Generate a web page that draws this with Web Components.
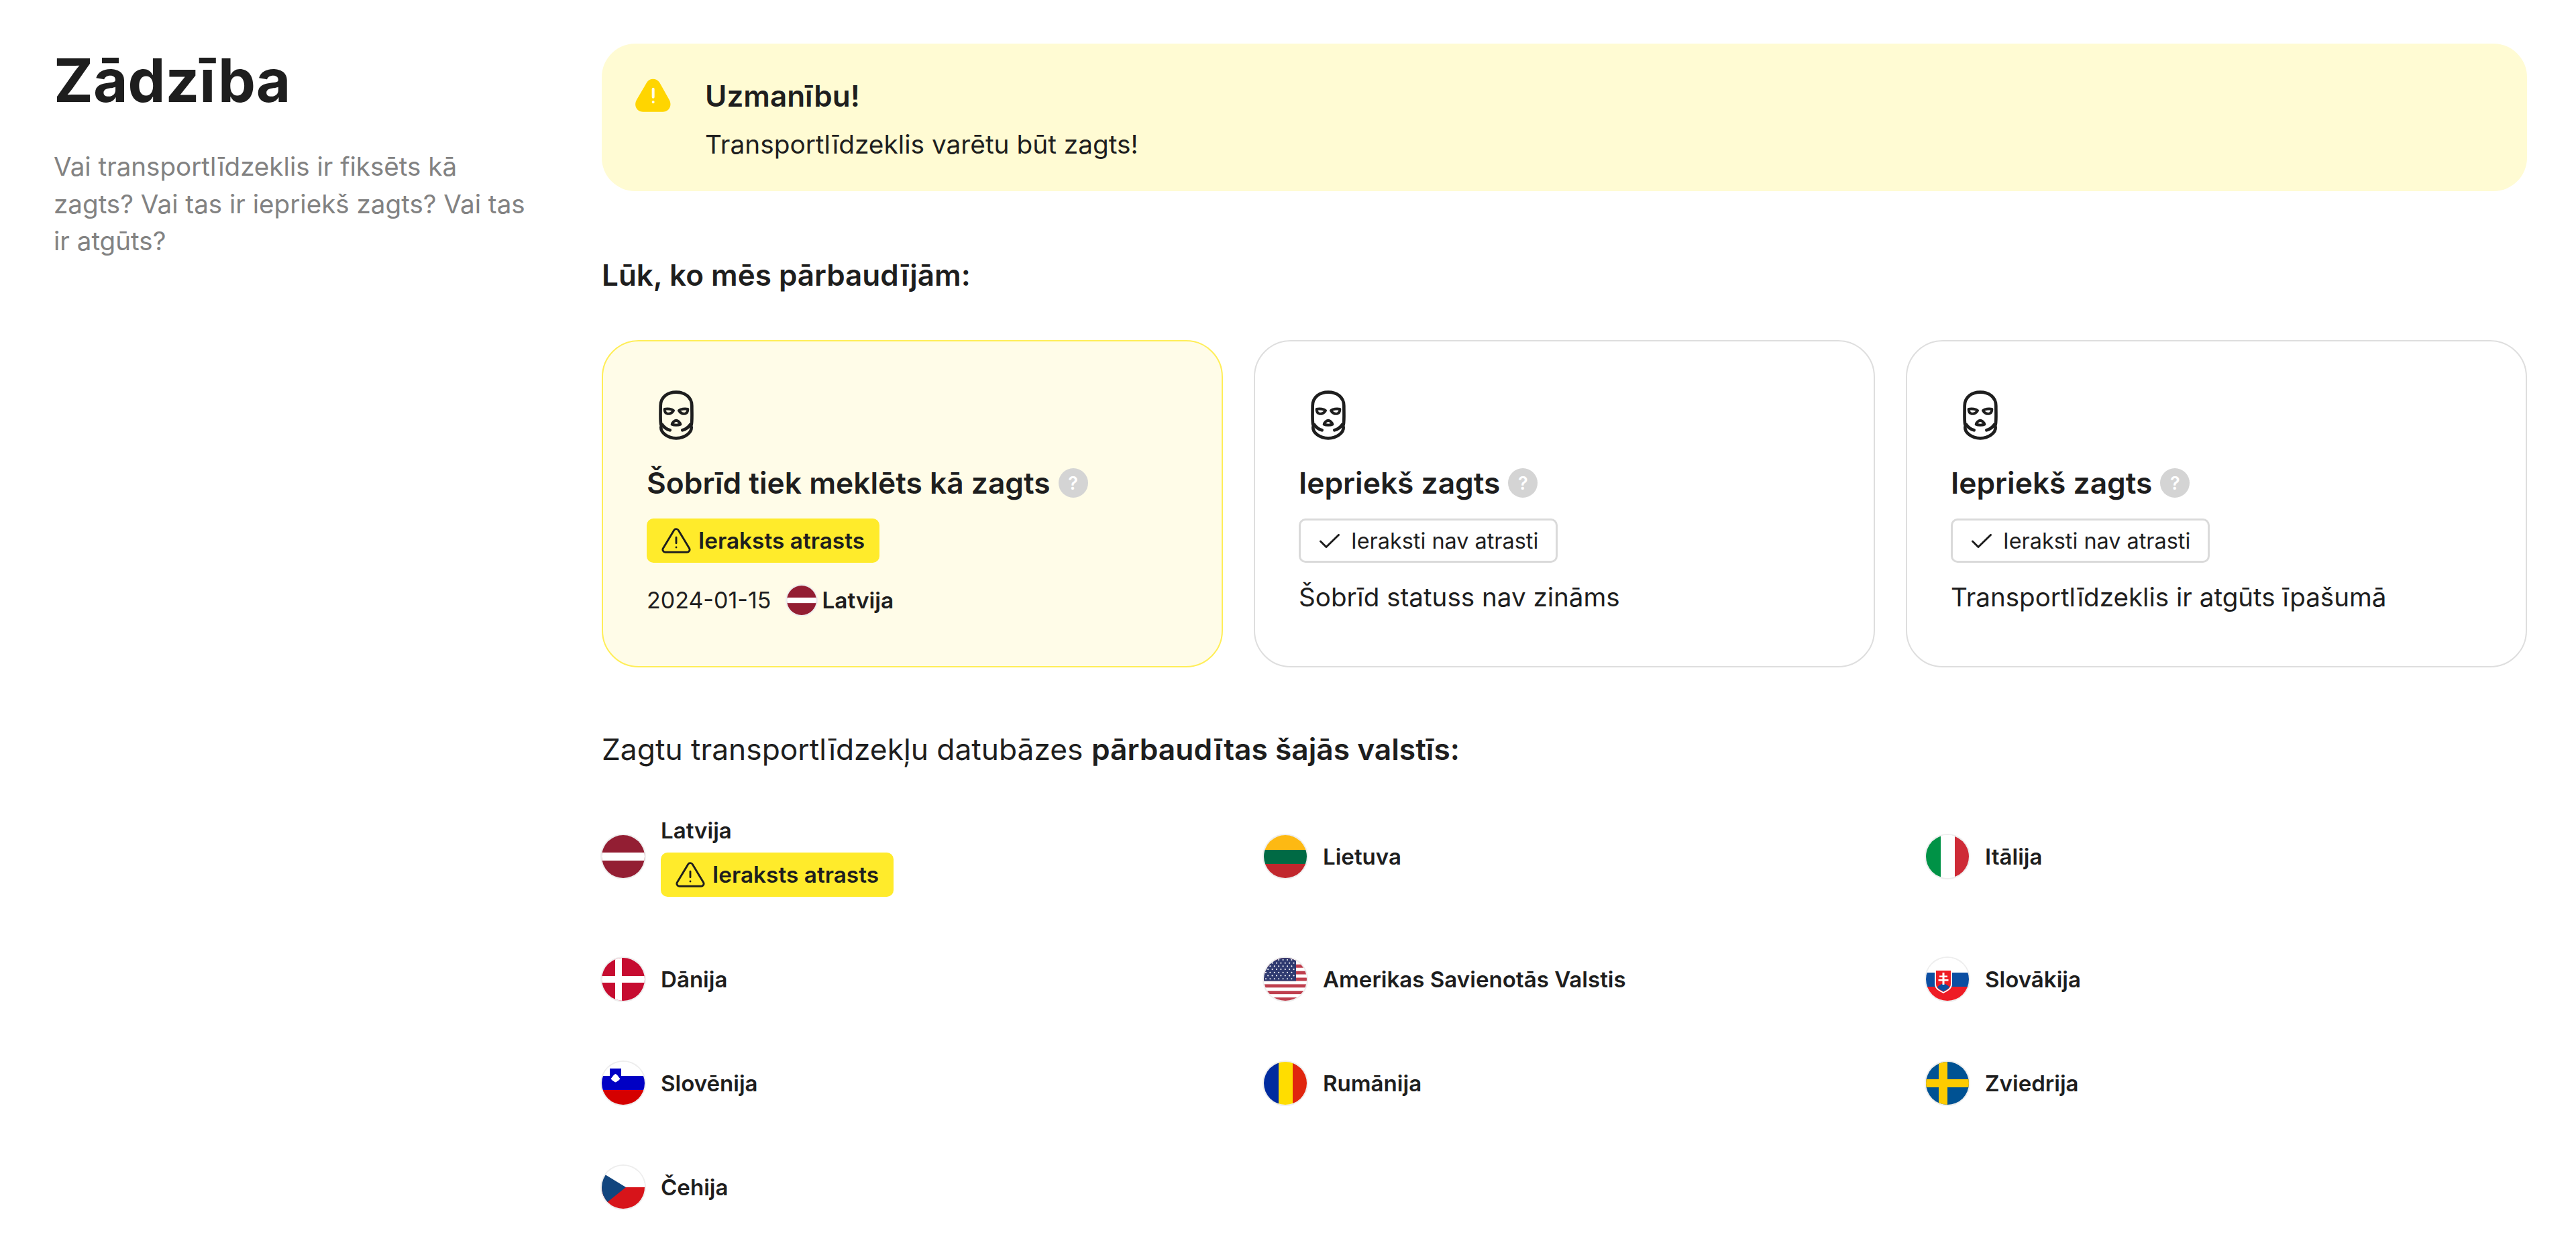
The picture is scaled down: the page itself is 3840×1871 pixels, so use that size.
<!DOCTYPE html>
<html lang="lv">
<head>
<meta charset="utf-8">
<title>Zādzība</title>
<style>
  html, body { margin: 0; background: #fff; }
  body { font-family: Inter, "Liberation Sans", sans-serif; color: #1e1e1e; }
</style>
</head>
<body>
<theft-page>
  <span slot="title">Zādzība</span>
  <span slot="lead">Vai transportlīdzeklis ir fiksēts kā zagts? Vai tas ir iepriekš zagts? Vai tas ir atgūts?</span>

  <alert-banner heading="Uzmanību!">Transportlīdzeklis varētu būt zagts!</alert-banner>

  <span slot="checks-title">Lūk, ko mēs pārbaudījām:</span>
  <check-card slot="checks" heading="Šobrīd tiek meklēts kā zagts" found>
    <status-badge found>Ieraksts atrasts</status-badge>
    <div slot="detail" class="detail">
      <found-detail date="2024-01-15" code="lv">Latvija</found-detail>
    </div>
  </check-card>
  <check-card slot="checks" heading="Iepriekš zagts">
    <status-badge>Ieraksti nav atrasti</status-badge>
    <span slot="detail">Šobrīd statuss nav zināms</span>
  </check-card>
  <check-card slot="checks" heading="Iepriekš zagts">
    <status-badge>Ieraksti nav atrasti</status-badge>
    <span slot="detail">Transportlīdzeklis ir atgūts īpašumā</span>
  </check-card>

  <span slot="countries-title">Zagtu transportlīdzekļu datubāzes <b style="font-weight:600">pārbaudītas šajās valstīs:</b></span>
  <country-item slot="countries" code="lv" found>Latvija</country-item>
  <country-item slot="countries" code="lt">Lietuva</country-item>
  <country-item slot="countries" code="it">Itālija</country-item>
  <country-item slot="countries" code="dk">Dānija</country-item>
  <country-item slot="countries" code="us">Amerikas Savienotās Valstis</country-item>
  <country-item slot="countries" code="sk">Slovākija</country-item>
  <country-item slot="countries" code="si">Slovēnija</country-item>
  <country-item slot="countries" code="ro">Rumānija</country-item>
  <country-item slot="countries" code="se">Zviedrija</country-item>
  <country-item slot="countries" code="cz">Čehija</country-item>
</theft-page>

<script>
// flags are drawn on a 64x64 box, the round clip comes from the element
function usFlag() {
  let stripes = "";
  for (let i = 0; i < 13; i += 2) {
    stripes += `<rect y="${i * 4.92}" width="64" height="4.92" fill="#bf3f4e"/>`;
  }
  let stars = "";
  for (let row = 0; row < 7; row++) {
    for (let col = 0; col < 7; col++) {
      const x = 3 + col * 6.4 + (row % 2 ? 3.2 : 0);
      stars += `<circle cx="${x}" cy="${3 + row * 4.7}" r="1.05" fill="#fff"/>`;
    }
  }
  return `<rect width="64" height="64" fill="#fff"/>${stripes}<rect width="48" height="34.5" fill="#2f3a70"/>${stars}`;
}

const FLAGS = {
  lv: `<rect width="64" height="64" fill="#931e33"/><rect y="26" width="64" height="12" fill="#fff"/>`,
  lt: `<rect width="64" height="22" fill="#fdb913"/><rect y="22" width="64" height="21" fill="#006a44"/><rect y="43" width="64" height="21" fill="#c1272d"/>`,
  it: `<rect width="22" height="64" fill="#009246"/><rect x="22" width="21" height="64" fill="#fff"/><rect x="43" width="21" height="64" fill="#ce2b37"/>`,
  dk: `<rect width="64" height="64" fill="#c60c30"/><rect x="20" width="10" height="64" fill="#fff"/><rect y="27" width="64" height="10" fill="#fff"/>`,
  us: usFlag(),
  sk: `<rect width="64" height="22" fill="#fff"/><rect y="22" width="64" height="21" fill="#0b4ea2"/><rect y="43" width="64" height="21" fill="#ee1c25"/>
       <path d="M13 17h26v22c0 8-8 11-13 14-5-3-13-6-13-14z" fill="#fff"/>
       <path d="M15 19h22v20c0 7-7 9.500-11 12-4-2.500-11-5-11-12z" fill="#ee1c25"/>
       <path d="M17 44c2-3 4-4 5-4 1-2 7-2 8 0 1 0 3 1 5 4-3 3-6 4-9 6-3-2-6-3-9-6z" fill="#0b4ea2"/>
       <path d="M24.500 22h3v18h-3zM20 26.500h12v2.500H20zM18.500 32h15v2.500h-15z" fill="#fff"/>`,
  si: `<rect width="64" height="22" fill="#fff"/><rect y="21" width="64" height="21" fill="#0000c4"/><rect y="42" width="64" height="22" fill="#d50000"/>
       <path d="M12 10h17v14c0 4-4 6-8.500 8-4.500-2-8.500-4-8.500-8z" fill="#0000c4"/>
       <path d="M13.500 25c2-1 3-5 7-7 4 2 5 6 7 7-2 3-4 4-7 5.500-3-1.500-5-2.500-7-5.500z" fill="#fff"/>`,
  ro: `<rect width="22" height="64" fill="#002b9f"/><rect x="22" width="21" height="64" fill="#ffdd00"/><rect x="43" width="21" height="64" fill="#e0260e"/>`,
  se: `<rect width="64" height="64" fill="#005293"/><rect x="19" width="13" height="64" fill="#fecb00"/><rect y="26" width="64" height="12" fill="#fecb00"/>`,
  cz: `<rect width="64" height="32" fill="#fff"/><rect y="32" width="64" height="32" fill="#d7141a"/><path d="M0 10 36 32 6 56 0 54z" fill="#11457e"/>`,
};

class CountryFlag extends HTMLElement {
  connectedCallback() {
    const size = this.getAttribute("size") || 64;
    const root = this.attachShadow({ mode: "open" });
    root.innerHTML = `
      <style>
        :host { display: block; flex: none; width: ${size}px; height: ${size}px; border-radius: 50%; box-shadow: 0 0 0 2px #eeeeee; }
        svg { display: block; width: 100%; height: 100%; border-radius: 50%; }
      </style>
      <svg viewBox="0 0 64 64" aria-hidden="true">${FLAGS[this.getAttribute("code")] || ""}</svg>`;
  }
}
customElements.define("country-flag", CountryFlag);

class StatusBadge extends HTMLElement {
  connectedCallback() {
    const root = this.attachShadow({ mode: "open" });
    const icon = this.hasAttribute("found")
      ? `<svg class="warn" viewBox="0 0 24 24" fill="none" stroke="#1e1e1e" stroke-width="1.500" stroke-linecap="round" stroke-linejoin="round"><path d="M12 9.500v4.500M12 17.200h.01M10.300 3.900 1.800 18a2 2 0 0 0 1.700 3h17a2 2 0 0 0 1.700-3L13.700 3.900a2 2 0 0 0-3.400 0z"/></svg>`
      : `<svg class="check" viewBox="0 0 30 21" fill="none" stroke="#1e1e1e" stroke-width="3" stroke-linecap="round" stroke-linejoin="round"><path d="M1.500 11 10 19.500 28.500 1.500"/></svg>`;
    root.innerHTML = `
      <style>
        :host { display: inline-flex; align-items: center; box-sizing: border-box; height: 66px; border-radius: 10px; white-space: nowrap; }
        :host([found]) { background: #ffeb2b; font-size: 33.400px; font-weight: 600; padding: 0 22px 0 21px; gap: 10px; }
        :host(:not([found])) { border: 3px solid #dadada; font-size: 32.400px; font-weight: 400; padding: 0 26px 0 28px; gap: 17px; }
        .warn { width: 46px; height: 46px; display: block; }
        .check { width: 30px; height: 21px; display: block; }
      </style>
      ${icon}<slot></slot>`;
  }
}
customElements.define("status-badge", StatusBadge);

class FoundDetail extends HTMLElement {
  connectedCallback() {
    const root = this.attachShadow({ mode: "open" });
    root.innerHTML = `
      <style>
        :host { display: flex; align-items: center; height: 50px; font-size: 34px; }
        .date { margin-right: 24px; }
        .name { margin-left: 8px; font-size: 33.400px; font-weight: 600; }
      </style>
      <span class="date">${this.getAttribute("date")}</span>
      <country-flag code="${this.getAttribute("code")}" size="44"></country-flag>
      <span class="name"><slot></slot></span>`;
  }
}
customElements.define("found-detail", FoundDetail);

class CheckCard extends HTMLElement {
  connectedCallback() {
    const root = this.attachShadow({ mode: "open" });
    root.innerHTML = `
      <style>
        :host { display: block; box-sizing: border-box; height: 488px; padding: 73px 66px 0 65px; border: 2px solid #dedede; border-radius: 55px; background: #fff; }
        :host([found]) { background: #fffce8; border-color: #ffee58; }
        .mask { display: block; width: 52px; height: 74px; margin-left: 18px; }
        .title { display: flex; align-items: center; gap: 12px; height: 64px; margin-top: 32px; font-size: 44.300px; font-weight: 600; }
        .help { display: flex; align-items: center; justify-content: center; width: 44px; height: 44px; border-radius: 50%; background: #d4d4d4; color: #fff; font-size: 27px; font-weight: 600; }
        .badge { margin-top: 21px; display: flex; }
        .detail { margin-top: 23px; font-size: 38.600px; line-height: 56px; }
        :host([found]) .detail { margin-top: 31px; }
      </style>
      <svg class="mask" viewBox="70 36 156 222" fill="none" stroke="#1e1e1e" stroke-width="14" stroke-linecap="round" stroke-linejoin="round" aria-hidden="true">
        <path d="M80 190C76 170 78 140 78 105 78 65 110 44 148 44 186 44 218 65 218 105 218 140 220 170 216 190"/>
        <path d="M80 200C78 225 110 250 148 250 186 250 218 225 216 200"/>
        <path d="M86 190C94 202 106 210 120 214M176 214C190 210 202 202 210 190"/>
        <path stroke-width="12" d="M96 120C110 116 128 120 136 126 130 138 118 142 108 140 100 138 96 130 96 120Z"/>
        <path stroke-width="12" d="M200 120C186 116 168 120 160 126 166 138 178 142 188 140 196 138 200 130 200 120Z"/>
        <path stroke-width="12" d="M148 170C156 171 165 180 167 188 158 192 138 192 129 188 131 180 140 171 148 170Z"/>
      </svg>
      <div class="title"><span>${this.getAttribute("heading")}</span><span class="help">?</span></div>
      <div class="badge"><slot></slot></div>
      <div class="detail"><slot name="detail"></slot></div>`;
  }
}
customElements.define("check-card", CheckCard);

class AlertBanner extends HTMLElement {
  connectedCallback() {
    const root = this.attachShadow({ mode: "open" });
    root.innerHTML = `
      <style>
        :host { display: flex; box-sizing: border-box; height: 220px; padding: 46px 46px 0; gap: 48px; background: #fffbd3; border-radius: 50px; }
        svg { display: block; flex: none; width: 60px; height: 60px; margin-top: 5px; }
        .heading { font-size: 44px; line-height: 64px; font-weight: 600; }
        .body { margin-top: 12px; font-size: 38.800px; line-height: 56px; }
      </style>
      <svg viewBox="69 48 180 180" aria-hidden="true">
        <path d="M132 70C145 48 175 48 190 70L232 145C248 172 232 200 205 200H115C88 200 72 172 88 145Z" fill="#ffd500"/>
        <path d="M161 98V134M161 156V157" stroke="#fffbe6" stroke-width="12" stroke-linecap="round" fill="none"/>
      </svg>
      <div>
        <div class="heading">${this.getAttribute("heading")}</div>
        <div class="body"><slot></slot></div>
      </div>`;
  }
}
customElements.define("alert-banner", AlertBanner);

class CountryItem extends HTMLElement {
  connectedCallback() {
    const root = this.attachShadow({ mode: "open" });
    const badge = this.hasAttribute("found") ? `<status-badge found>Ieraksts atrasts</status-badge>` : "";
    root.innerHTML = `
      <style>
        :host { display: flex; align-items: center; gap: 24px; font-size: 33.100px; font-weight: 600; }
        .text { display: flex; flex-direction: column; align-items: flex-start; gap: 11px; line-height: 43px; }
      </style>
      <country-flag code="${this.getAttribute("code")}"></country-flag>
      <div class="text"><span><slot></slot></span>${badge}</div>`;
  }
}
customElements.define("country-item", CountryItem);

class TheftPage extends HTMLElement {
  connectedCallback() {
    const root = this.attachShadow({ mode: "open" });
    root.innerHTML = `
      <style>
        :host { display: flex; box-sizing: border-box; min-height: 1871px; padding: 65px 73px 0 80px; }
        aside { flex: none; width: 817px; }
        h1 { margin: 0; font-size: 88.800px; line-height: 110px; font-weight: 700; }
        p { margin: 46px 0 0; width: 720px; color: #828282; font-size: 38.600px; line-height: 55.500px; }
        main { flex: 1; min-width: 0; }
        .h { height: 64px; line-height: 64px; font-size: 44.300px; }
        .h1 { margin-top: 93px; font-size: 44px; font-weight: 600; }
        .h2 { margin-top: 90px; }
        .cards { display: grid; grid-template-columns: repeat(3, 1fr); gap: 46px; margin-top: 65px; }
        .list { display: grid; grid-template-columns: repeat(3, 1fr); column-gap: 91px; row-gap: 91px; margin-top: 68px; }
      </style>
      <aside>
        <h1><slot name="title"></slot></h1>
        <p><slot name="lead"></slot></p>
      </aside>
      <main>
        <slot></slot>
        <div class="h h1"><slot name="checks-title"></slot></div>
        <div class="cards"><slot name="checks"></slot></div>
        <div class="h h2"><slot name="countries-title"></slot></div>
        <div class="list"><slot name="countries"></slot></div>
      </main>`;
  }
}
customElements.define("theft-page", TheftPage);
</script>
</body>
</html>
